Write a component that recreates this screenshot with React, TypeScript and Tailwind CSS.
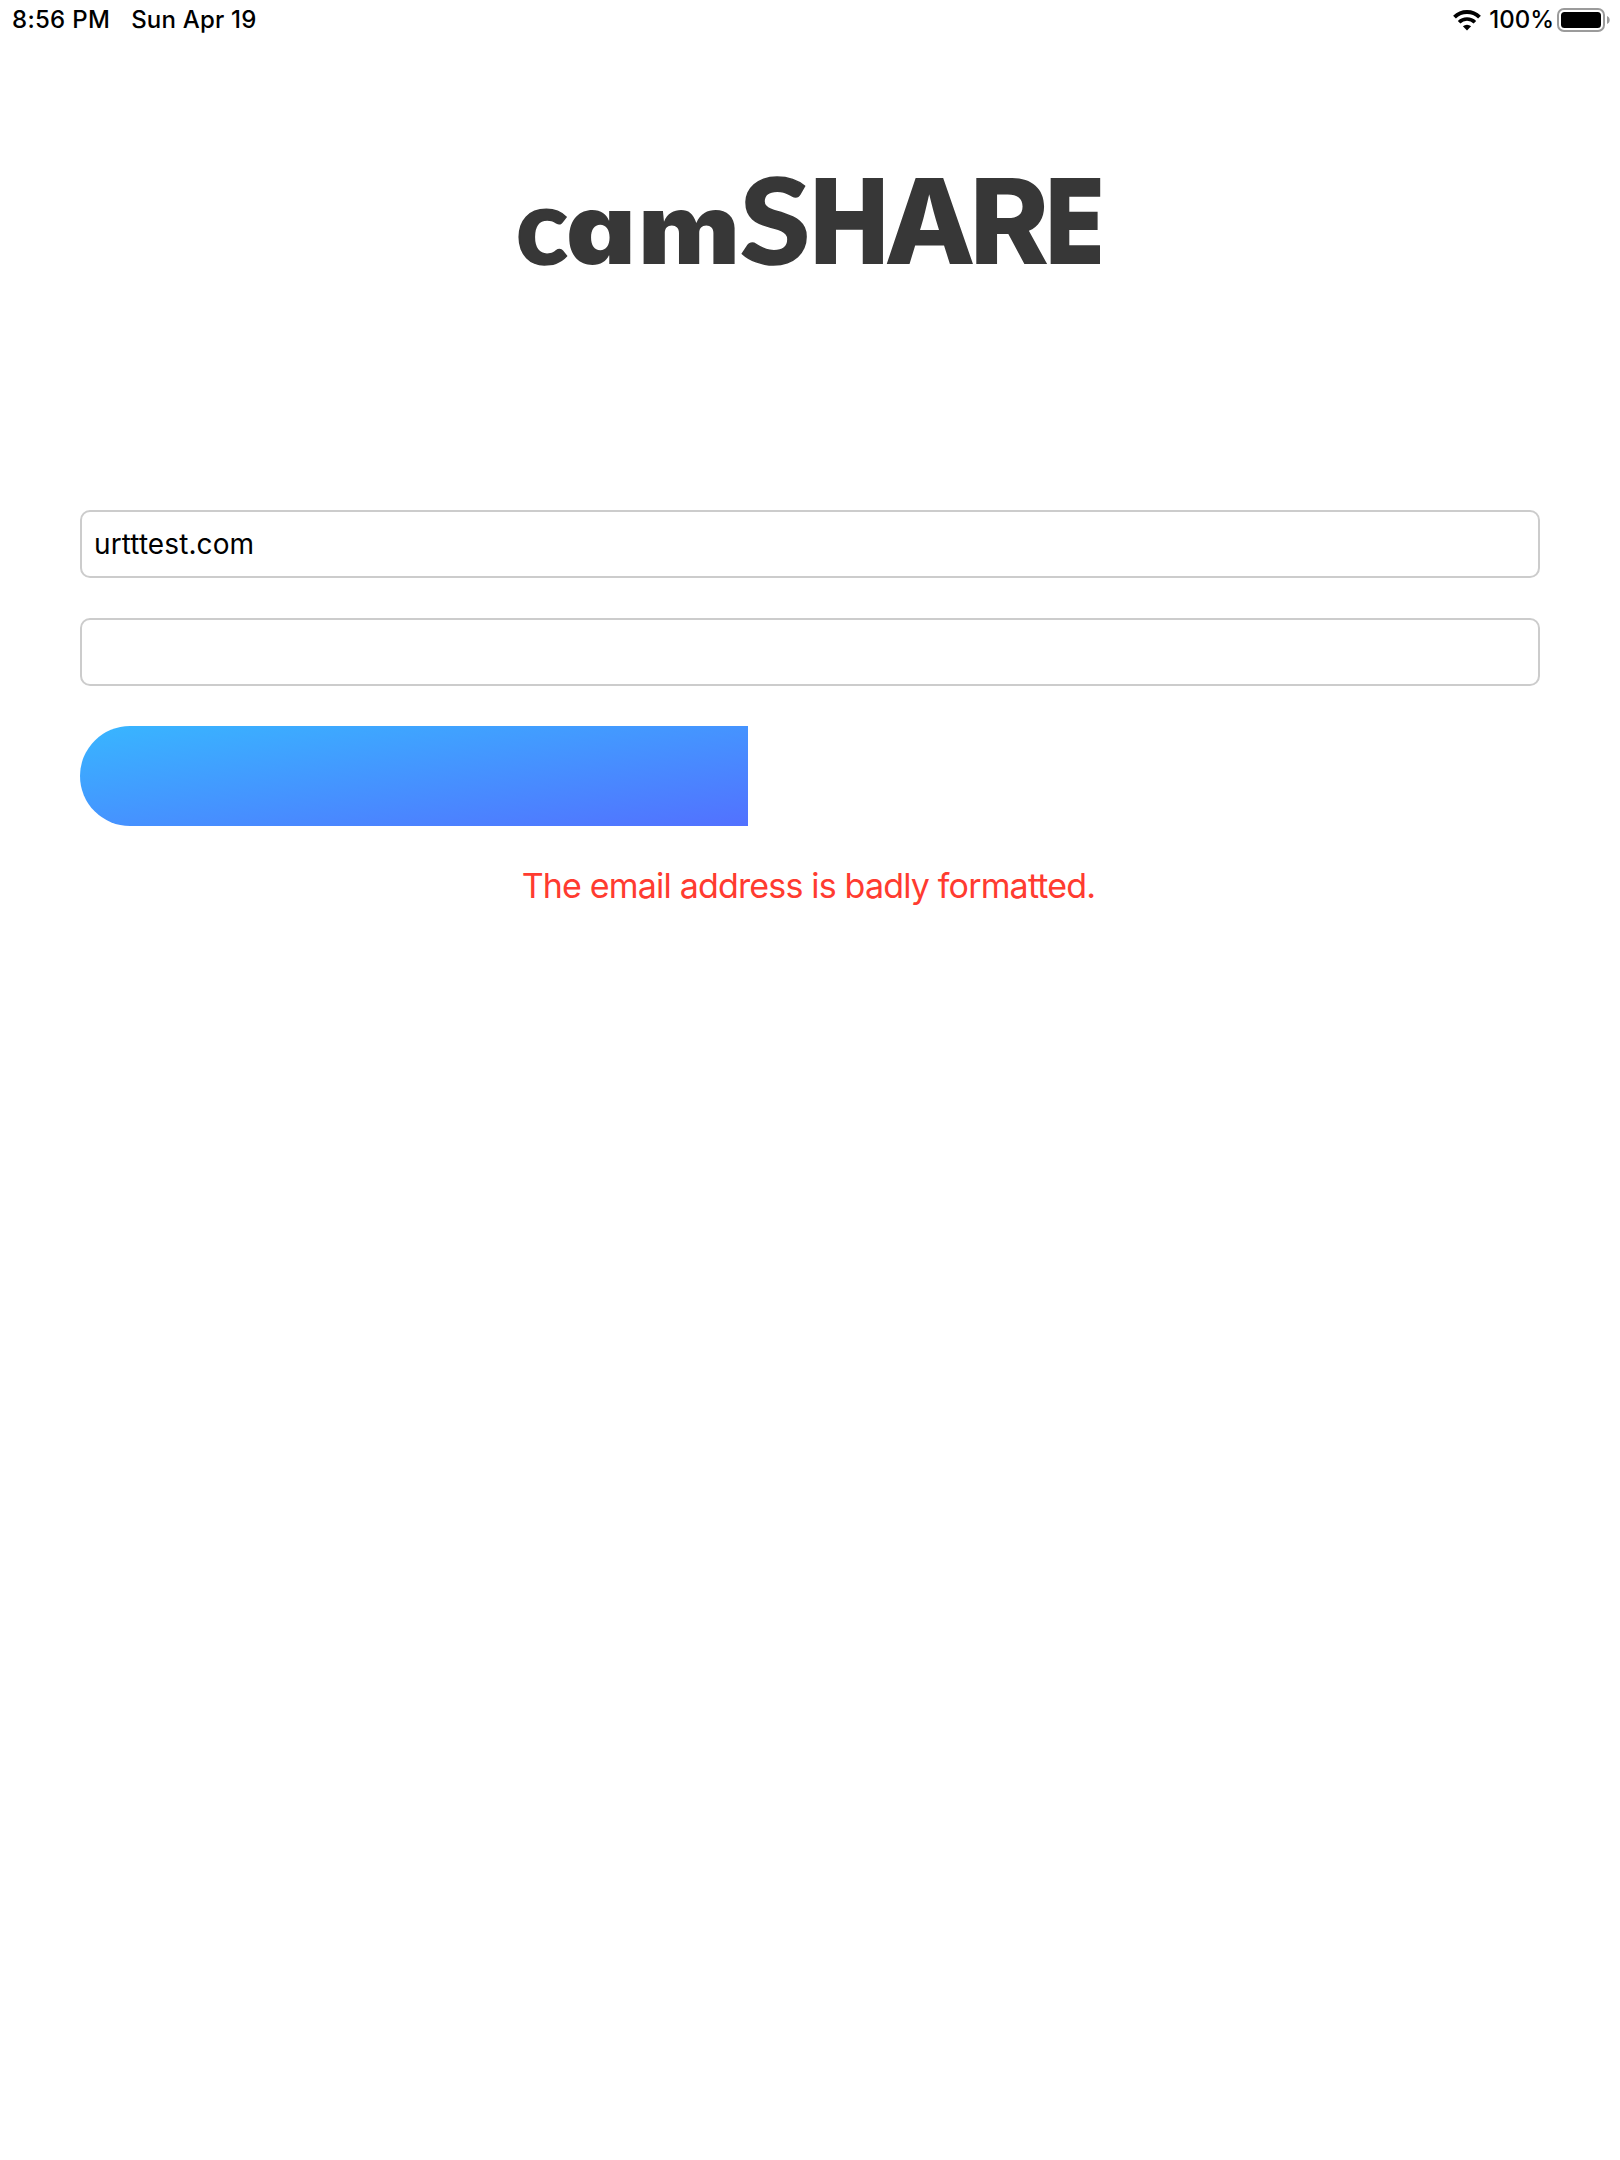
function Wifi() {
  return (
    <svg width="28" height="21" viewBox="0 0 28 21" fill="none" stroke="#000" className="block">
      <path d="M1.5 7.1a18 18 0 0 1 25 0" strokeWidth="4" />
      <path d="M6.1 12.2a11.3 11.3 0 0 1 15.8 0" strokeWidth="3.7" />
      <path d="M14 20.4l-4.1-4.1a6.2 6.2 0 0 1 8.2 0z" fill="#000" stroke="none" />
    </svg>
  );
}

function Battery() {
  return (
    <svg width="54" height="24" viewBox="0 0 54 24" className="block">
      <rect x="1" y="1" width="46" height="22" rx="6" fill="none" stroke="#9b9b9b" strokeWidth="2" />
      <rect x="4" y="4" width="40" height="16" rx="3.5" fill="#000" />
      <path d="M50 8c3.6 1.3 3.6 6.7 0 8z" fill="#9b9b9b" />
    </svg>
  );
}

function Wordmark() {
  return (
    <svg
      width="620"
      height="200"
      viewBox="500 120 620 200"
      fill="#373737"
      stroke="#373737"
      strokeWidth="0"
      className="block overflow-visible"
    >
      <g className="font-['Lato',sans-serif] text-[104px] font-black">
        <text transform="translate(516 263.5) scale(1.03 1)" strokeWidth="1.5">c</text>
      </g>
      <g className="font-['Inter',sans-serif] text-[98px] font-black [font-feature-settings:'cv11']">
        <text transform="translate(566 264) scale(1.1 1)">a</text>
        <text transform="translate(638.3 264) scale(1.1 1)">m</text>
      </g>
      <g className="font-['Lato',sans-serif] text-[118px] font-black">
        <text transform="translate(740 264) scale(1.08 1)" strokeWidth="1.5">S</text>
      </g>
      <g className="font-['Inter',sans-serif] text-[118px] font-extrabold">
        <text transform="translate(811 264) scale(0.867 1)" className="font-black">H</text>
        <text transform="translate(884 264) scale(1.01 1)">A</text>
        <text transform="translate(969.6 264) scale(1.02 1)">R</text>
        <text transform="translate(1046.3 264) scale(0.8 1)" className="font-black">E</text>
      </g>
    </svg>
  );
}

export default function App() {
  return (
    <div className="flex h-[2160px] w-[1620px] flex-col bg-white font-['Inter',sans-serif] text-black">
      <header className="flex h-10 items-center justify-between pl-3 pr-[9px] text-[24px] font-medium leading-10">
        <div className="flex gap-[21px]">
          <span className="tracking-[0.3px]">8:56 PM</span>
          <span className="tracking-[0.2px]">Sun Apr 19</span>
        </div>
        <div className="flex items-center">
          <Wifi />
          <span className="ml-2 mr-[3px]">100%</span>
          <Battery />
        </div>
      </header>

      <h1 className="mx-auto mt-20 h-[200px] w-[620px]">
        <Wordmark />
      </h1>

      <main className="mt-[190px] flex flex-col gap-10 px-20">
        <input
          type="text"
          defaultValue="urtttest.com"
          className="h-[68px] rounded-[10px] border-2 border-[#cccccc] px-3 text-[28px] tracking-[0.1px] outline-none"
        />
        <input type="password" className="h-[68px] rounded-[10px] border-2 border-[#cccccc] px-3 outline-none" />
        <button
          type="button"
          aria-label="Log in"
          className="h-[100px] w-[668px] rounded-l-full bg-[linear-gradient(to_bottom_right,#38b6ff,#5271ff)]"
        />
        <p className="pr-[3px] text-center text-[34px] leading-10 tracking-[-0.82px] text-[#ff3b30]">
          The email address is badly formatted.
        </p>
      </main>
    </div>
  );
}
